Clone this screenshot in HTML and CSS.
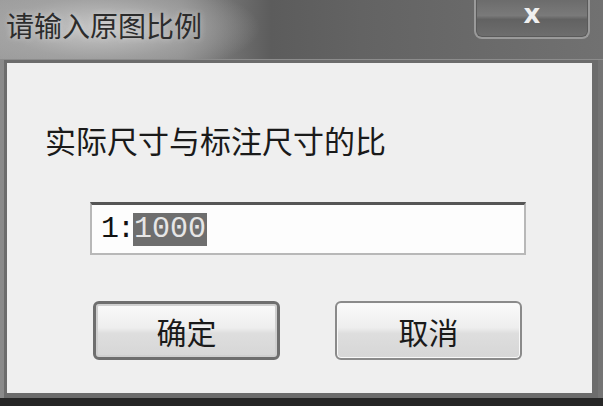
FILE: index.html
```html
<!DOCTYPE html>
<html lang="zh-CN">
<head>
  <meta charset="UTF-8" />
  <title>请输入原图比例</title>
  <link rel="stylesheet" href="styles.css">
</head>
<body>

  <div class="window">
    <div class="titlebar">
      <span class="title">请输入原图比例</span>
      <button class="close-btn">x</button>
    </div>

    <div class="client">
      <p class="label">实际尺寸与标注尺寸的比</p>
      <div class="field">
        <span class="prefix">1:</span><span class="selected">1000</span>
      </div>
      <div class="actions">
        <button class="btn btn-default">确定</button>
        <button class="btn">取消</button>
      </div>
    </div>

    <div class="bottom-band"></div>
  </div>

</body>
</html>
```

FILE: styles.css
```css
* {
  box-sizing: border-box;
}

body {
  margin: 0;
  padding: 0;
  width: 603px;
  height: 406px;
  overflow: hidden;
  font-family: "Noto Sans CJK SC", "Noto Sans", sans-serif;
}

.window {
  width: 603px;
  height: 406px;
  display: flex;
  flex-direction: column;
  background: linear-gradient(90deg, #8a8a8a 0%, #7a7a7a 40%, #6a6a6a 50%, #747474 100%);
}

.titlebar {
  height: 60px;
  display: flex;
  justify-content: space-between;
  align-items: flex-start;
  padding: 0 13px 0 6px;
  background:
    radial-gradient(ellipse 160px 50px at 100px 28px, rgba(205, 205, 205, 0.9) 0%, rgba(170, 170, 170, 0.6) 60%, rgba(120, 120, 120, 0) 100%),
    linear-gradient(90deg, #9a9a9a 0%, #8a8a8a 30%, #5c5c5c 45%, #636363 60%, #717171 100%);
  border-bottom: 1px solid #8c8c8c;
}

.title {
  margin-top: 5px;
  font-size: 28px;
  color: #2c2c2c;
  text-shadow: 0 0 6px rgba(230, 230, 230, 0.6);
}

.close-btn {
  width: 116px;
  height: 41px;
  margin-top: -2px;
  border: 2px solid #9a9a9a;
  border-top: none;
  border-radius: 0 0 8px 8px;
  background: linear-gradient(180deg, #6a6a6a 0%, #7a7a7a 45%, #626262 55%, #6e6e6e 100%);
  box-shadow: inset 0 0 0 1px #5a5a5a;
  color: #f0f0f0;
  font-family: "DejaVu Sans", sans-serif;
  font-weight: bold;
  font-size: 26px;
  line-height: 24px;
  padding: 0 0 8px;
}

.client {
  flex: 1;
  margin: 0 5px 0 4px;
  border: 3px solid #6c6c6c;
  border-bottom-width: 5px;
  border-right-width: 6px;
  background: #efefef;
  padding: 0 0 0 38px;
}

.label {
  margin: 57px 0 0;
  font-size: 31px;
  line-height: 40px;
  color: #1a1a1a;
}

.field {
  margin: 42px 0 0 45px;
  width: 436px;
  height: 53px;
  background: #fdfdfd;
  border: 2px solid #b8b8b8;
  border-top: 3px solid #555;
  display: flex;
  align-items: center;
  padding-left: 9px;
  font-family: "Liberation Mono", "DejaVu Sans Mono", monospace;
  font-size: 30px;
}

.prefix {
  color: #111;
  letter-spacing: -2px;
}

.selected {
  background: #6e6e6e;
  color: #e6e6e6;
  padding: 0 1px;
  line-height: 33px;
}

.actions {
  margin: 46px 0 0 48px;
  display: flex;
  gap: 55px;
}

.btn {
  width: 187px;
  height: 59px;
  border: 2px solid #8a8a8a;
  border-radius: 6px;
  background: linear-gradient(180deg, #fafafa 0%, #eeeeee 45%, #dedede 55%, #d6d6d6 100%);
  box-shadow: inset 0 0 0 1px #f8f8f8;
  font-family: "Noto Sans CJK SC", sans-serif;
  font-size: 30px;
  color: #1a1a1a;
  padding: 0;
}

.btn-default {
  border: 3px solid #6e6e6e;
  box-shadow: inset 0 0 0 2px #cfcfcf;
}

.bottom-band {
  height: 8px;
  background: #262626;
}
```
